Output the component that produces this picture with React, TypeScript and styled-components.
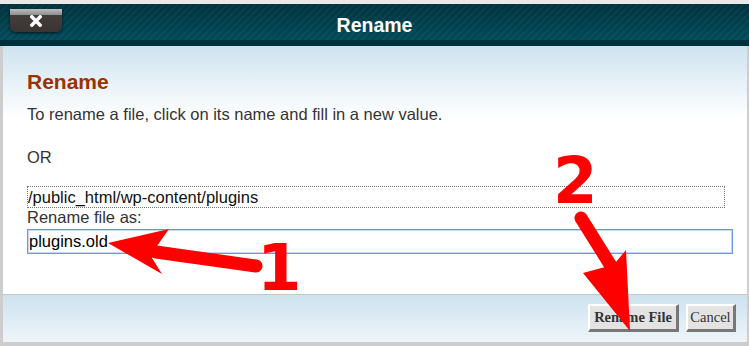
import styled, { createGlobalStyle } from "styled-components";

const GlobalStyle = createGlobalStyle`
  html, body {
    margin: 0;
    padding: 0;
    background: #e9e9e9;
  }
  body {
    font-family: "Liberation Sans", Arial, sans-serif;
  }
`;

const App = () => {
  return (
    <>
      <GlobalStyle />
      <Page>
        <Header>
          <CloseButton aria-label="close">
            <svg width="12" height="12" viewBox="0 0 12 12">
              <path d="M1.8 1.8 L10.2 10.2 M10.2 1.8 L1.8 10.2" stroke="#fff" strokeWidth="3.4" strokeLinecap="square" />
            </svg>
          </CloseButton>
          <Title>Rename</Title>
        </Header>
        <Body>
          <Content>
            <Heading>Rename</Heading>
            <Text>To rename a file, click on its name and fill in a new value.</Text>
            <Text $gap={24}>OR</Text>
            <PathBox>/public_html/wp-content/plugins</PathBox>
            <Text $gap={0}>Rename file as:</Text>
            <NameInput defaultValue="plugins.old" />
          </Content>
          <Footer>
            <FooterButton $bold $w={91}>Rename File</FooterButton>
            <FooterButton $w={50}>Cancel</FooterButton>
          </Footer>
        </Body>
        <Annotations width="749" height="346" viewBox="0 0 749 346">
          <line x1="156" y1="252" x2="256" y2="266" stroke="#ff0000" strokeWidth="13" strokeLinecap="round" />
          <polygon points="108,243 169,229 157,246 152,258 162,274" fill="#ff0000" />
          <text x="257" y="290" fontFamily="DejaVu Sans" fontWeight="bold" fontSize="64" fill="#ff0000">1</text>
          <line x1="581" y1="218" x2="611" y2="266" stroke="#ff0000" strokeWidth="13" strokeLinecap="round" />
          <polygon points="630,331 583,273 605,267 616,262 626,250" fill="#ff0000" />
          <text x="553" y="203" fontFamily="DejaVu Sans" fontWeight="bold" fontSize="64" fill="#ff0000">2</text>
        </Annotations>
      </Page>
    </>
  );
};
export default App;

const Page = styled.div`
  position: relative;
  width: 749px;
  height: 346px;
  padding-top: 4px;
  box-sizing: border-box;
  display: flex;
  flex-direction: column;
  background: #e9e9e9;
  overflow: hidden;
`;

const Header = styled.div`
  height: 36px;
  display: grid;
  grid-template-columns: 1fr auto 1fr;
  align-items: start;
  border-bottom: 6px solid #00303b;
  background:
    repeating-linear-gradient(135deg, rgba(255, 255, 255, 0.035) 0 2px, transparent 2px 5px),
    linear-gradient(#00333e, #014a5a);
`;

const CloseButton = styled.button`
  justify-self: start;
  margin: 5px 0 0 10px;
  width: 52px;
  height: 23px;
  padding: 0;
  border: none;
  border-radius: 0 0 6px 6px;
  display: flex;
  align-items: center;
  justify-content: center;
  background: linear-gradient(#bdbdbd 0, #8e8e8e 6px, #423d3a 6px, #3a3532 100%);
  box-shadow: 0 1px 3px rgba(0, 0, 0, 0.7);
  cursor: pointer;
`;

const Title = styled.div`
  margin-top: 7px;
  line-height: 28px;
  font-size: 19.5px;
  font-weight: bold;
  color: #ffffff;
`;

const Body = styled.div`
  flex: 1;
  display: flex;
  flex-direction: column;
  border-left: 3px solid #cdcdcd;
  border-right: 2px solid #cdcdcd;
  border-bottom: 4px solid #cdcdcd;
  background: linear-gradient(#cee3f0 0, #ffffff 72px);
`;

const Content = styled.div`
  flex: 1;
  padding: 24px 0 0 24px;
`;

const Heading = styled.h2`
  margin: 0;
  font-size: 21px;
  line-height: 24px;
  font-weight: bold;
  color: #993300;
`;

const Text = styled.p<{ $gap?: number }>`
  margin: ${(p) => (p.$gap ?? 11)}px 0 0;
  font-size: 16.5px;
  line-height: 19px;
  color: #333333;
`;

const PathBox = styled.div`
  margin-top: 19px;
  width: 698px;
  height: 22px;
  box-sizing: border-box;
  border: 1px dotted #777777;
  font-size: 16.5px;
  line-height: 20px;
  color: #111111;
`;

const NameInput = styled.input`
  display: block;
  margin-top: 2px;
  width: 706px;
  height: 25px;
  box-sizing: border-box;
  padding: 0 1px;
  border: 1px solid #6f97df;
  box-shadow: inset 0 0 0 1px #c4d6f5;
  outline: none;
  font-family: "Liberation Sans", Arial, sans-serif;
  font-size: 16.5px;
  color: #000000;
  background: #ffffff;
`;

const Footer = styled.div`
  height: 48px;
  box-sizing: border-box;
  border-top: 1px solid #c6c6c6;
  padding: 9px 11px 0 0;
  display: flex;
  justify-content: flex-end;
  align-items: flex-start;
  gap: 7px;
  background: linear-gradient(#cde2ef, #eef5f9);
`;

const FooterButton = styled.button<{ $bold?: boolean; $w: number }>`
  width: ${(p) => p.$w}px;
  height: 28px;
  box-sizing: border-box;
  padding: 0;
  border-style: solid;
  border-width: 2px 3px 3px 2px;
  border-color: #ffffff #777777 #777777 #ffffff;
  background: #e3e3e3;
  font-family: "Liberation Serif", "Times New Roman", serif;
  font-size: 14.5px;
  font-weight: ${(p) => (p.$bold ? "bold" : "normal")};
  color: #333333;
  white-space: nowrap;
  cursor: pointer;
`;

const Annotations = styled.svg`
  position: absolute;
  left: 0;
  top: 0;
  pointer-events: none;
`;
